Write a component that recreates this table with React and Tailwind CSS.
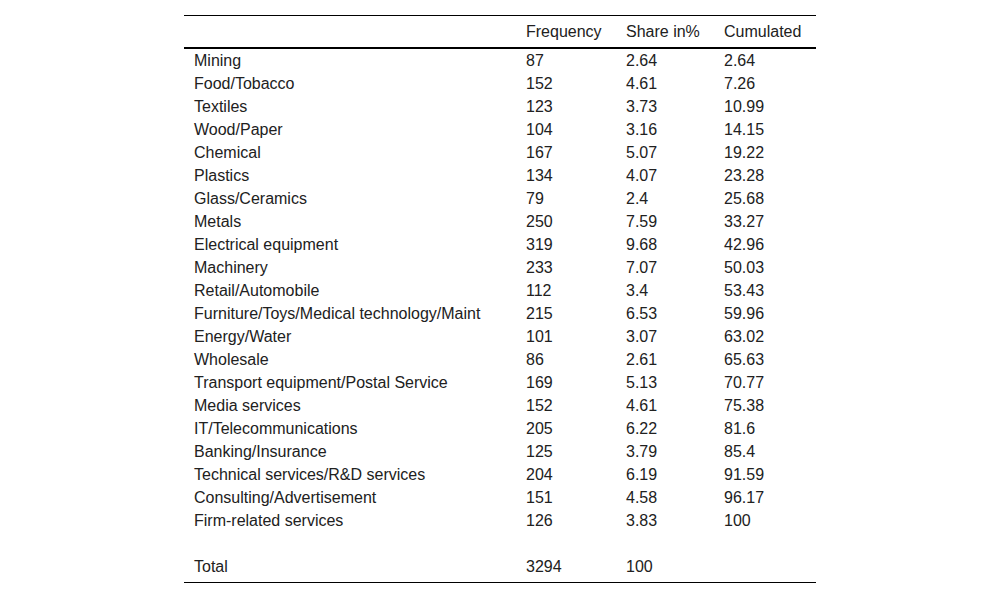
const rows = [
  ['Mining', '87', '2.64', '2.64'],
  ['Food/Tobacco', '152', '4.61', '7.26'],
  ['Textiles', '123', '3.73', '10.99'],
  ['Wood/Paper', '104', '3.16', '14.15'],
  ['Chemical', '167', '5.07', '19.22'],
  ['Plastics', '134', '4.07', '23.28'],
  ['Glass/Ceramics', '79', '2.4', '25.68'],
  ['Metals', '250', '7.59', '33.27'],
  ['Electrical equipment', '319', '9.68', '42.96'],
  ['Machinery', '233', '7.07', '50.03'],
  ['Retail/Automobile', '112', '3.4', '53.43'],
  ['Furniture/Toys/Medical technology/Maint', '215', '6.53', '59.96'],
  ['Energy/Water', '101', '3.07', '63.02'],
  ['Wholesale', '86', '2.61', '65.63'],
  ['Transport equipment/Postal Service', '169', '5.13', '70.77'],
  ['Media services', '152', '4.61', '75.38'],
  ['IT/Telecommunications', '205', '6.22', '81.6'],
  ['Banking/Insurance', '125', '3.79', '85.4'],
  ['Technical services/R&D services', '204', '6.19', '91.59'],
  ['Consulting/Advertisement', '151', '4.58', '96.17'],
  ['Firm-related services', '126', '3.83', '100'],
  ['', '', '', ''],
  ['Total', '3294', '100', ''],
];

const Row = ({ cells, className = '' }) => (
  <div className={`flex items-center ${className}`}>
    <div className="w-[332px] pl-[10px]">{cells[0]}</div>
    <div className="w-[100px] pl-[10px]">{cells[1]}</div>
    <div className="w-[98px] pl-[10px]">{cells[2]}</div>
    <div className="w-[102px] pl-[10px]">{cells[3]}</div>
  </div>
);

export default function App() {
  return (
    <div className="w-[1000px] h-[599px] bg-white pt-[15px] text-[16px] leading-[18px] text-[#212121] [font-family:'Liberation_Sans',Arial,sans-serif]">
      <div className="mx-auto w-[632px] border-t border-black border-b">
        <Row cells={['', 'Frequency', 'Share in%', 'Cumulated']} className="h-[33px] pt-[1px] border-b-2 border-black" />
        <div className="pb-[4px]">
          {rows.map((r, i) => (
            <Row key={i} cells={r} className="h-[23px] pt-[1px]" />
          ))}
        </div>
      </div>
    </div>
  );
}
